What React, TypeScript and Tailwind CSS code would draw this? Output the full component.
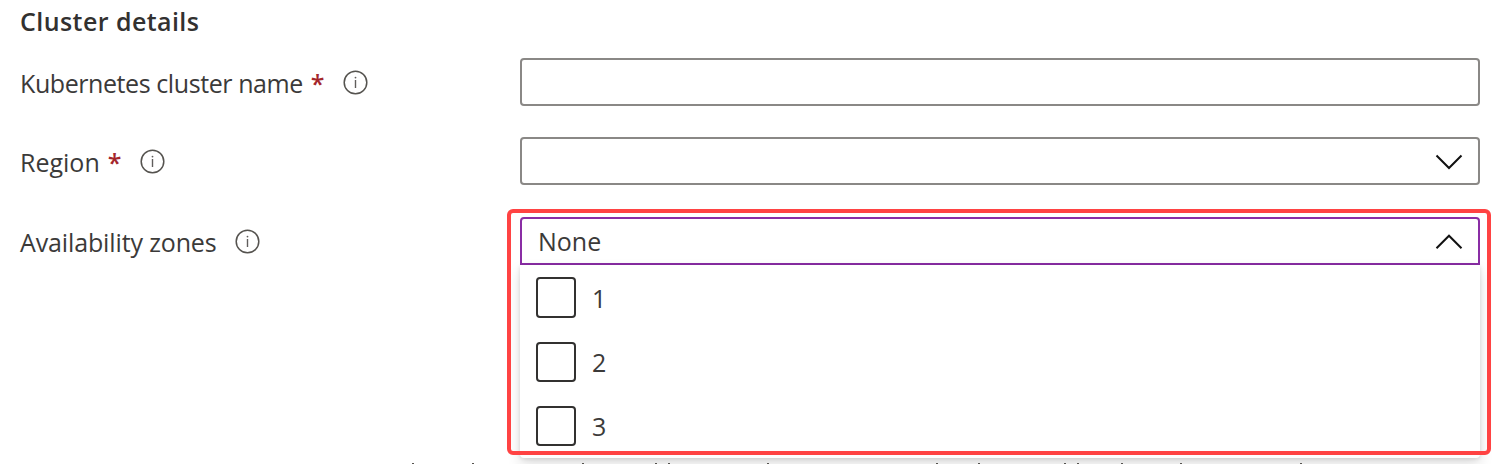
import React from "react";

const footnoteAscenders = [413, 473, 583, 656, 669, 768, 937, 979, 1065, 1078, 1122, 1181, 1301];

function InfoIcon() {
  return (
    <svg className="h-[25px] w-[25px] shrink-0" viewBox="0 0 25 25" fill="none" aria-hidden="true">
      <circle cx="12.5" cy="12.5" r="11.3" stroke="#55534f" strokeWidth="1.5" />
      <path d="M12.5 10V18" stroke="#605e5c" strokeWidth="1.4" />
      <circle cx="12.5" cy="7.6" r="0.9" fill="#605e5c" />
    </svg>
  );
}

function Chevron({ up = false }: { up?: boolean }) {
  return (
    <svg className="relative top-px h-[16px] w-[28px] shrink-0" viewBox="0 0 28 16" fill="none" aria-hidden="true">
      <path d={up ? "M1.5 14.2 14 1.7 26.5 14.2" : "M1.5 1.5 14 14 26.5 1.5"} stroke="#111" strokeWidth="2" />
    </svg>
  );
}

function Label({ text, spacing, required = false }: { text: string; spacing: string; required?: boolean }) {
  return (
    <div className="flex h-12 w-[500px] shrink-0 items-center">
      <span className={`relative top-px whitespace-pre ${spacing}`}>{text}</span>
      {required && <span className="relative top-px ml-2 w-[13px] font-semibold text-[#a4262c]">*</span>}
      <span className={required ? "ml-[19px]" : "ml-[18px]"}>
        <InfoIcon />
      </span>
    </div>
  );
}

function Option({ value, box = "h-10" }: { value: string; box?: string }) {
  return (
    <div className="flex h-10 items-end">
      <span className={`${box} w-10 shrink-0 rounded-[4px] border-2 border-[#323130]`} />
      <span className="ml-4 h-10 leading-10">{value}</span>
    </div>
  );
}

export default function App() {
  return (
    <div className="h-[467px] bg-white">
      <main className="relative h-[464px] w-[1500px] overflow-hidden bg-white pl-5 font-['Open_Sans','Noto_Sans',sans-serif] text-[25px] leading-9 text-[#3b3a39]">
        <h1 className="h-[58px] pt-[3px] text-[25px] font-semibold tracking-[0.43px] text-[#323130]">Cluster details</h1>
        <div className="flex h-[79px]">
          <Label text="Kubernetes cluster name" spacing="tracking-[-0.42px]" required />
          <div className="h-12 w-[960px] rounded-[4px] border-2 border-[#8a8886]" />
        </div>
        <div className="flex h-[80px]">
          <Label text="Region" spacing="tracking-[0px]" required />
          <div className="flex h-12 w-[960px] items-center justify-end rounded-[4px] border-2 border-[#8a8886] pr-[15px]">
            <Chevron />
          </div>
        </div>
        <div className="flex">
          <Label text="Availability zones" spacing="tracking-[-0.13px]" />
          <div className="relative w-[960px]">
            <div className="flex h-12 items-center justify-between rounded-t-[4px] border-2 border-[#8a2da5] pr-[15px] pl-4">
              <span>None</span>
              <Chevron up />
            </div>
            <div className="absolute top-12 left-0 z-10 flex h-[193px] w-full flex-col gap-6 rounded-b-[4px] bg-white pt-[13px] pl-4 shadow-[0_6px_14px_rgba(0,0,0,0.13),0_1px_4px_rgba(0,0,0,0.11)]">
              <Option value="1" box="h-[41px]" />
              <Option value="2" />
              <Option value="3" />
            </div>
            <div className="pointer-events-none absolute top-[-8px] left-[-13px] z-20 h-[246px] w-[984px] rounded-[6px] border-4 border-[#ff4343]" />
          </div>
        </div>
        <svg className="absolute bottom-0 left-0 z-30 h-px w-[1500px]" viewBox="0 0 1500 1" aria-hidden="true">
          {footnoteAscenders.map((x) => (
            <rect key={x} x={x - 1} y="0" width="2" height="1" fill="#55534f" />
          ))}
        </svg>
      </main>
    </div>
  );
}
